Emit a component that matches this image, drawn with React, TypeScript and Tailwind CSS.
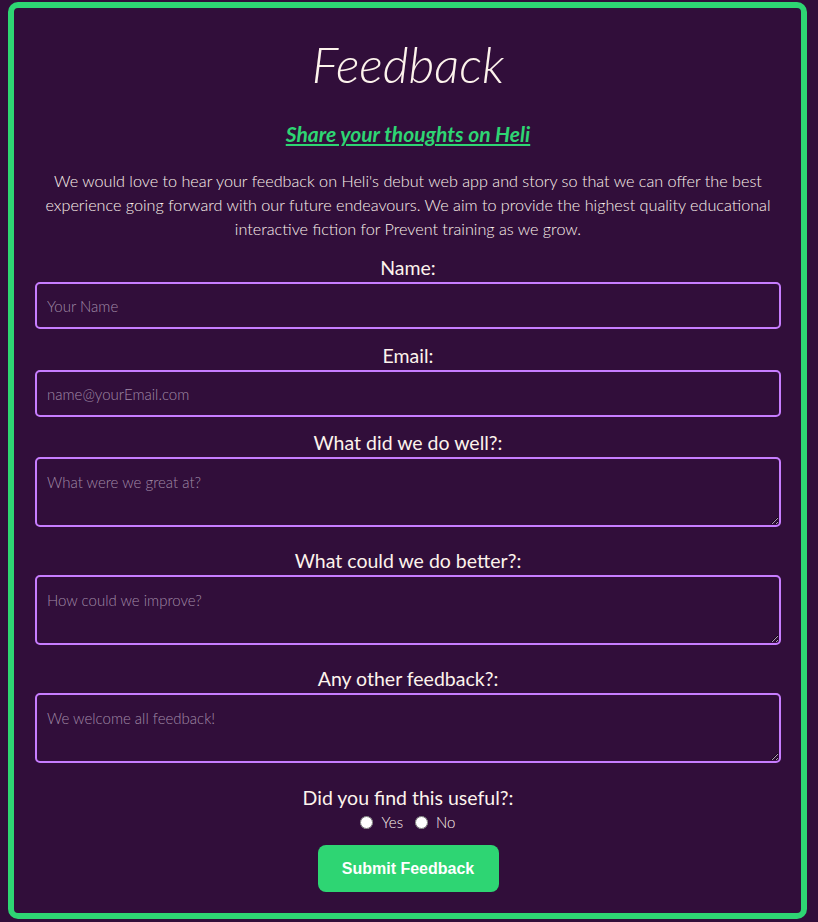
import { useState } from 'react';

const labelClass = 'block text-center text-[19.5px] leading-[22px] text-[#fdf3ec]';
const fieldClass =
  'block w-full rounded-[5px] border-2 border-[#c77dff] bg-[#310e3a] px-[10px] text-[15px] font-light text-[#fdf3ec] placeholder:text-[#a08aa6] outline-none';

export default function App() {
  const [useful, setUseful] = useState<string | null>(null);

  return (
    <div className="min-h-[922px] bg-[#310e3a] pt-[2px] font-['Lato',sans-serif]">
      <div className="ml-2 h-[917px] w-[799px] rounded-[10px] border-[6px] border-[#2ed573] pl-[21px] pr-[20px]">
        {/* Header */}
        <h1 className="pt-[26px] text-center text-[50px] font-light italic leading-[60px] text-[#fdf3ec]">
          Feedback
        </h1>
        <h2 className="mt-[28px] text-center text-[21px] font-bold italic leading-[24px] text-[#2ed573] underline">
          Share your thoughts on Heli
        </h2>
        <p className="mx-auto mt-[23px] max-w-[750px] text-center text-[16.2px] font-light leading-[24px] text-[#fdf3ec]">
          We would love to hear your feedback on Heli's debut web app and story so that we can offer the best
          experience going forward with our future endeavours. We aim to provide the highest quality educational
          interactive fiction for Prevent training as we grow.
        </p>

        {/* Form */}
        <form className="mt-[16px] flex flex-col" onSubmit={(e) => e.preventDefault()}>
          <label className={labelClass}>Name:</label>
          <input className={`${fieldClass} mt-[3px] h-[47px]`} placeholder="Your Name" />

          <label className={`${labelClass} mt-[16px]`}>Email:</label>
          <input className={`${fieldClass} mt-[3px] h-[47px]`} placeholder="name@yourEmail.com" />

          <label className={`${labelClass} mt-[15px]`}>What did we do well?:</label>
          <textarea className={`${fieldClass} mt-[3px] h-[70px] py-[12px]`} placeholder="What were we great at?" />

          <label className={`${labelClass} mt-[23px]`}>What could we do better?:</label>
          <textarea className={`${fieldClass} mt-[3px] h-[70px] py-[12px]`} placeholder="How could we improve?" />

          <label className={`${labelClass} mt-[23px]`}>Any other feedback?:</label>
          <textarea className={`${fieldClass} mt-[3px] h-[70px] py-[12px]`} placeholder="We welcome all feedback!" />

          <p className={`${labelClass} mt-[24px]`}>Did you find this useful?:</p>
          <div className="mt-[3px] flex items-center justify-center gap-[12px] text-[15px] font-light leading-[20px] text-[#fdf3ec]">
            {['Yes', 'No'].map((opt) => (
              <label key={opt} className="flex items-center gap-[8px]">
                <input
                  type="radio"
                  name="useful"
                  checked={useful === opt}
                  onChange={() => setUseful(opt)}
                  className="size-[13px] accent-[#2ed573]"
                />
                {opt}
              </label>
            ))}
          </div>

          <button
            type="submit"
            className="mx-auto mt-[13px] h-[47px] w-[181px] rounded-[8px] bg-[#2ed573] font-['Liberation_Sans',sans-serif] text-[16px] font-bold text-white"
          >
            Submit Feedback
          </button>
        </form>
      </div>
    </div>
  );
}
